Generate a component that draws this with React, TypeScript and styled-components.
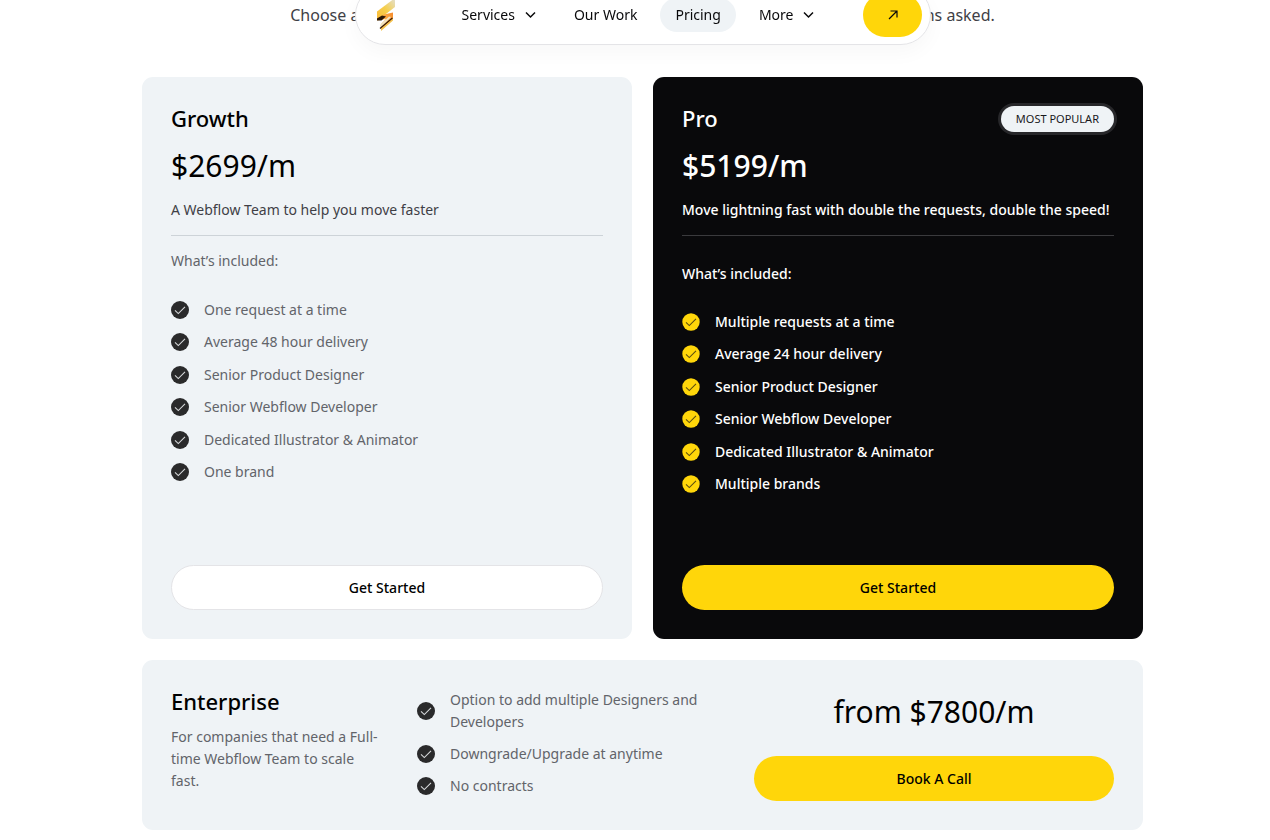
import React from "react";
import styled, { createGlobalStyle, css } from "styled-components";

const GlobalStyle = createGlobalStyle`
  *, *::before, *::after { box-sizing: border-box; }
  body {
    margin: 0;
    background: #fff;
    color: #09090b;
    font-family: "Noto Sans", sans-serif;
    font-size: 14px;
    line-height: 22px;
  }
  h2, p, ul { margin: 0; padding: 0; }
  ul { list-style: none; }
`;

const Page = styled.div`
  padding-left: 15px;
`;

const NavBar = styled.header`
  position: fixed;
  z-index: 10;
  top: -15px;
  left: 15px;
  right: 0;
  width: 576px;
  height: 60px;
  margin: 0 auto;
  padding: 0 7px 0 20px;
  display: flex;
  align-items: center;
  justify-content: space-between;
  background: #fff;
  border: 1px solid #e4e4e7;
  border-radius: 30px;
  box-shadow: 0 8px 20px rgba(0, 0, 0, 0.03);
`;

const LogoLink = styled.a`
  display: flex;
  margin-right: 15px;
`;

const NavLinks = styled.nav`
  display: flex;
  align-items: center;
  gap: 8px;
`;

const navItem = css`
  display: flex;
  align-items: center;
  gap: 10px;
  height: 34px;
  padding: 0 15px;
  border: 0;
  border-radius: 17px;
  color: #09090b;
  font: inherit;
  text-decoration: none;
  cursor: pointer;
`;

const NavLink = styled.a<{ $active?: boolean }>`
  ${navItem}
  background: ${(p) => (p.$active ? "#eff3f6" : "transparent")};
`;

const NavMenu = styled.button`
  ${navItem}
  background: transparent;
`;

const ContactLink = styled.a`
  display: flex;
  align-items: center;
  justify-content: center;
  width: 59px;
  height: 44px;
  border-radius: 22px;
  background: #ffd60a;
  color: #09090b;
`;

const Intro = styled.p`
  padding: 4px 0 51px;
  color: #3f3f46;
  font-size: 16px;
  text-align: center;
  white-space: nowrap;
`;

const Plans = styled.main`
  display: grid;
  grid-template-columns: 1fr 1fr;
  gap: 21px;
  max-width: 1001px;
  margin: 0 auto;
  padding-bottom: 10px;
`;

const cardBase = css<{ $dark?: boolean }>`
  padding: 29px;
  border-radius: 11px;
  background: ${(p) => (p.$dark ? "#09090b" : "#eff3f6")};
  color: ${(p) => (p.$dark ? "#fff" : "#000")};
  font-weight: ${(p) => (p.$dark ? 500 : 400)};
`;

const Card = styled.section<{ $dark?: boolean }>`
  ${cardBase}
  display: flex;
  flex-direction: column;
`;

const WideCard = styled.section<{ $dark?: boolean }>`
  ${cardBase}
  grid-column: 1 / -1;
  display: grid;
  grid-template-columns: 217fr 308fr 360fr;
  align-items: start;
  gap: 29px;
`;

const CardHead = styled.div`
  display: flex;
  align-items: flex-start;
  justify-content: space-between;
  min-height: 26px;
`;

const PlanName = styled.h2`
  font-size: 22px;
  line-height: 24px;
  font-weight: 500;
`;

const Badge = styled.span`
  padding: 0 15px;
  border-radius: 13px;
  background: #eff3f6;
  box-shadow: 0 0 0 3px #27272a;
  color: #18181b;
  font-size: 11px;
  line-height: 26px;
  font-weight: 400;
`;

const Price = styled.p<{ $centered?: boolean }>`
  margin-top: ${(p) => (p.$centered ? "5px" : "16px")};
  font-size: 30px;
  line-height: 36px;
  text-align: ${(p) => (p.$centered ? "center" : "left")};
`;

const Summary = styled.p<{ $dark?: boolean }>`
  margin-top: 15px;
  padding-bottom: 14px;
  border-bottom: 1px solid ${(p) => (p.$dark ? "#3a3a3d" : "#cdd3d8")};
  color: ${(p) => (p.$dark ? "#fff" : "#3f3f46")};
`;

const Included = styled.p<{ $dark?: boolean }>`
  margin: ${(p) => (p.$dark ? "27px 0 26px" : "14px 0 27px")};
  color: ${(p) => (p.$dark ? "#fff" : "#62646a")};
`;

const Blurb = styled.p`
  margin-top: 13px;
  padding-right: 5px;
  color: #62646a;
`;

const FeatureList = styled.ul<{ $dark?: boolean; $tall?: boolean }>`
  display: flex;
  flex-direction: column;
  justify-content: space-between;
  min-height: ${(p) => (p.$tall ? "184px" : "0")};
  gap: 10px;
  color: ${(p) => (p.$dark ? "#fff" : "#62646a")};
`;

const Feature = styled.li`
  display: flex;
  align-items: center;
  gap: 15px;

  svg { flex: none; }
`;

const Action = styled.button<{ $plain?: boolean }>`
  width: 100%;
  height: 45px;
  border: ${(p) => (p.$plain ? "1px solid #e4e4e7" : "0")};
  border-radius: 23px;
  background: ${(p) => (p.$plain ? "#fff" : "#ffd60a")};
  color: #000;
  font: inherit;
  font-weight: 500;
  cursor: pointer;
`;

const CardFoot = styled.div`
  margin-top: auto;
  padding-top: 70px;
`;

const Quote = styled.div`
  display: flex;
  flex-direction: column;
  gap: 26px;
`;

const Logo = () => (
  <svg width="22" height="34" viewBox="0 0 22 34" aria-hidden="true">
    <defs>
      <linearGradient id="upper" x1="0" y1="1" x2="1" y2="0">
        <stop offset="0" stopColor="#fbb836" />
        <stop offset="0.5" stopColor="#f5cf4c" />
        <stop offset="1" stopColor="#e2e0d4" />
      </linearGradient>
      <linearGradient id="lower" x1="0" y1="1" x2="1" y2="0">
        <stop offset="0" stopColor="#ffd45e" />
        <stop offset="0.5" stopColor="#ffae45" />
        <stop offset="1" stopColor="#f58a2c" />
      </linearGradient>
    </defs>
    <path d="M1 13.5 L19 0 V9 L8 17.5 L1 22.5Z" fill="url(#upper)" />
    <path d="M1 22.5 L8 16.5 L17 14.5 V21 L5 32 V26 L10 21Z" fill="url(#lower)" />
    <path d="M1 20.5 L6 17.5 L10 18.5 L5.5 22.5 H1Z" fill="#2b1708" />
    <path d="M4 27 L13 18.5 L15 19 L4.5 30Z" fill="#efe3c4" />
    <path d="M4 30.5 L16.5 20" stroke="#3a1d08" strokeWidth="1.4" />
    <path d="M5 31 L17 20.5 V22.5 L5 33Z" fill="#f4c24e" />
  </svg>
);

const Chevron = () => (
  <svg width="11" height="8" viewBox="0 0 11 8" fill="none" aria-hidden="true">
    <path d="M1 1.5 L5.5 6 L10 1.5" stroke="currentColor" strokeWidth="1.5" />
  </svg>
);

const Arrow = () => (
  <svg width="12" height="12" viewBox="0 0 12 12" fill="none" aria-hidden="true">
    <path d="M2 10 L10 2 M3.5 2 H10 V8.5" stroke="currentColor" strokeWidth="1.2" />
  </svg>
);

const Tick = ({ dark }: { dark?: boolean }) => (
  <svg width="18" height="18" viewBox="0 0 18 18" fill="none" aria-hidden="true">
    <circle cx="9" cy="9" r={dark ? 8.7 : 9} fill={dark ? "#ffd60a" : "#2a2a2b"} />
    <path
      d="M4 9.4 L7.3 12.6 L14 5.8"
      stroke={dark ? "#5c4e10" : "#d6d8da"}
      strokeWidth="1.1"
    />
  </svg>
);

const Features = ({ items, dark, tall }: { items: string[]; dark?: boolean; tall?: boolean }) => (
  <FeatureList $dark={dark} $tall={tall}>
    {items.map((item) => (
      <Feature key={item}>
        <Tick dark={dark} />
        <span>{item}</span>
      </Feature>
    ))}
  </FeatureList>
);

type Plan = {
  name: string;
  price: string;
  summary: string;
  badge?: string;
  dark?: boolean;
  features: string[];
};

const plans: Plan[] = [
  {
    name: "Growth",
    price: "$2699/m",
    summary: "A Webflow Team to help you move faster",
    features: [
      "One request at a time",
      "Average 48 hour delivery",
      "Senior Product Designer",
      "Senior Webflow Developer",
      "Dedicated Illustrator & Animator",
      "One brand",
    ],
  },
  {
    name: "Pro",
    price: "$5199/m",
    summary: "Move lightning fast with double the requests, double the speed!",
    badge: "MOST POPULAR",
    dark: true,
    features: [
      "Multiple requests at a time",
      "Average 24 hour delivery",
      "Senior Product Designer",
      "Senior Webflow Developer",
      "Dedicated Illustrator & Animator",
      "Multiple brands",
    ],
  },
];

const enterpriseFeatures = [
  "Option to add multiple Designers and Developers",
  "Downgrade/Upgrade at anytime",
  "No contracts",
];

export default function App() {
  return (
    <Page>
      <GlobalStyle />
      <NavBar>
        <LogoLink href="#" aria-label="Home">
          <Logo />
        </LogoLink>
        <NavLinks>
          <NavMenu type="button">
            Services <Chevron />
          </NavMenu>
          <NavLink href="#work">Our Work</NavLink>
          <NavLink href="#pricing" $active>
            Pricing
          </NavLink>
          <NavMenu type="button">
            More <Chevron />
          </NavMenu>
        </NavLinks>
        <ContactLink href="#contact" aria-label="Contact">
          <Arrow />
        </ContactLink>
      </NavBar>

      <Intro>
        Choose a plan that fits your needs. Pause, upgrade, or cancel at any time, no questions asked.
      </Intro>

      <Plans>
        {plans.map((plan) => (
          <Card key={plan.name} $dark={plan.dark}>
            <CardHead>
              <PlanName>{plan.name}</PlanName>
              {plan.badge && <Badge>{plan.badge}</Badge>}
            </CardHead>
            <Price>{plan.price}</Price>
            <Summary $dark={plan.dark}>{plan.summary}</Summary>
            <Included $dark={plan.dark}>What’s included:</Included>
            <Features items={plan.features} dark={plan.dark} tall />
            <CardFoot>
              <Action type="button" $plain={!plan.dark}>
                Get Started
              </Action>
            </CardFoot>
          </Card>
        ))}

        <WideCard>
          <div>
            <PlanName>Enterprise</PlanName>
            <Blurb>For companies that need a Full-time Webflow Team to scale fast.</Blurb>
          </div>
          <Features items={enterpriseFeatures} />
          <Quote>
            <Price $centered>from $7800/m</Price>
            <Action type="button">Book A Call</Action>
          </Quote>
        </WideCard>
      </Plans>
    </Page>
  );
}
